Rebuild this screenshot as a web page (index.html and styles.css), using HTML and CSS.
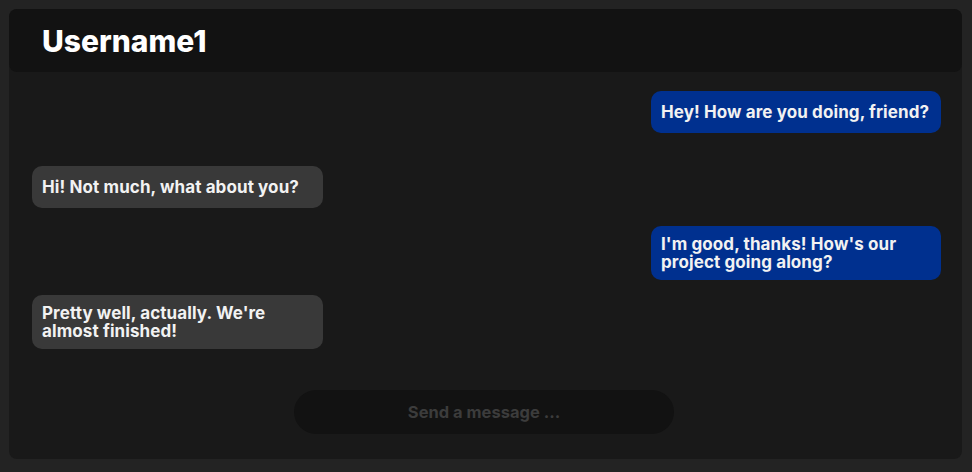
FILE: index.html
```html
<!DOCTYPE html>
<html>
<head>
<meta charset="utf-8">
<link rel="stylesheet" href="styles.css">
</head>
<body>
<div class="chat">
  <div class="header">Username1</div>
  <div class="messages">
    <div class="msg out m1">Hey! How are you doing, friend?</div>
    <div class="msg in m2">Hi! Not much, what about you?</div>
    <div class="msg out m3">I'm good, thanks! How's our project going along?</div>
    <div class="msg in m4">Pretty well, actually. We're almost finished!</div>
  </div>
  <div class="composer">
    <input class="input" type="text" placeholder="Send a message ...">
  </div>
</div>
</body>
</html>
```
FILE: styles.css
```css
html, body {
  margin: 0;
  padding: 0;
}
body {
  background: #232323;
  width: 972px;
  height: 472px;
  box-sizing: border-box;
  padding: 9px 10px 0 9px;
  font-family: "Inter", "Liberation Sans", sans-serif;
  color: #f2f2f2;
}
.chat {
  width: 953px;
  height: 450px;
  background: #191919;
  border-radius: 8px;
  display: flex;
  flex-direction: column;
}
.header {
  height: 63px;
  flex: 0 0 auto;
  background: #121212;
  border-radius: 8px;
  display: flex;
  align-items: center;
  padding-left: 33px;
  font-size: 30px;
  font-weight: 800;
  color: #ffffff;
}
.messages {
  flex: 1 1 auto;
  display: flex;
  flex-direction: column;
  padding: 0 21px 0 23px;
}
.msg {
  width: 291px;
  box-sizing: border-box;
  min-height: 42px;
  padding: 9px 10px;
  border-radius: 10px;
  display: flex;
  align-items: center;
  font-size: 17px;
  line-height: 18px;
  font-weight: 700;
  letter-spacing: 0.1px;
}
.msg.out {
  width: 290px;
  align-self: flex-end;
  background: #00308f;
}
.msg.in {
  align-self: flex-start;
  background: #393939;
}
.m1 { margin-top: 19px; }
.m2 { margin-top: 33px; }
.m3 { margin-top: 18px; }
.m4 { margin-top: 15px; }
.composer {
  display: flex;
  justify-content: center;
  padding-right: 3px;
  margin-bottom: 25px;
}
.input {
  width: 380px;
  height: 44px;
  box-sizing: border-box;
  border: none;
  outline: none;
  border-radius: 22px;
  background: #121212;
  text-align: center;
  font-family: "Inter", "Liberation Sans", sans-serif;
  font-size: 16.5px;
  font-weight: 700;
  color: #f2f2f2;
}
.input::placeholder {
  color: #3c3c3c;
}
```
